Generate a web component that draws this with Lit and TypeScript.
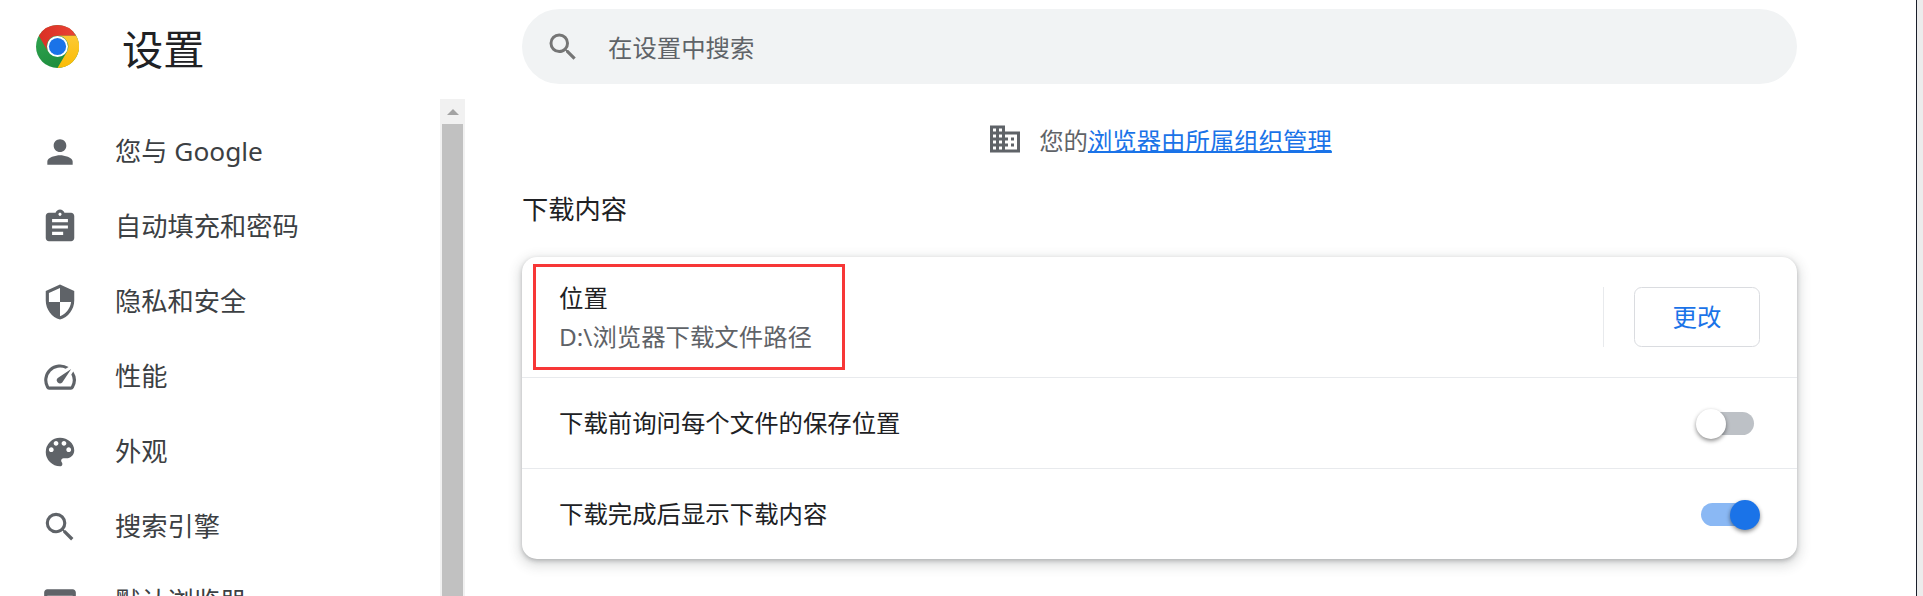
import { LitElement, html, css, svg } from "lit";
import { customElement } from "lit/decorators.js";

const icons: Record<string, any> = {
  person: svg`<path d="M12 12c2.21 0 4-1.79 4-4s-1.79-4-4-4-4 1.79-4 4 1.79 4 4 4zm0 2c-2.67 0-8 1.34-8 4v2h16v-2c0-2.66-5.33-4-8-4z"/>`,
  assignment: svg`<path d="M19 3h-4.18C14.4 1.84 13.3 1 12 1c-1.3 0-2.4.84-2.82 2H5c-1.1 0-2 .9-2 2v14c0 1.1.9 2 2 2h14c1.1 0 2-.9 2-2V5c0-1.1-.9-2-2-2zm-7 0c.55 0 1 .45 1 1s-.45 1-1 1-1-.45-1-1 .45-1 1-1zm2 14H7v-2h7v2zm3-4H7v-2h10v2zm0-4H7V7h10v2z"/>`,
  shield: svg`<path d="M12 1L3 5v6c0 5.55 3.84 10.74 9 12 5.16-1.26 9-6.45 9-12V5l-9-4zm0 10.99h7c-.53 4.12-3.28 7.79-7 8.94V12H5V6.3l7-3.11v8.8z"/>`,
  speed: svg`<path d="M20.38 8.57l-1.23 1.85a8 8 0 0 1-.22 7.58H5.07A8 8 0 0 1 15.58 6.85l1.85-1.23A10 10 0 0 0 3.35 19a2 2 0 0 0 1.72 1h13.85a2 2 0 0 0 1.74-1 10 10 0 0 0-.27-10.44zm-9.79 6.84a2 2 0 0 0 2.83 0l5.66-8.49-8.49 5.66a2 2 0 0 0 0 2.83z"/>`,
  palette: svg`<path d="M12 3a9 9 0 0 0 0 18c.83 0 1.5-.67 1.5-1.5 0-.39-.15-.74-.39-1.01-.23-.26-.38-.61-.38-.99 0-.83.67-1.5 1.5-1.5H16c2.76 0 5-2.24 5-5 0-4.42-4.03-8-9-8zm-5.5 9c-.83 0-1.5-.67-1.5-1.5S5.67 9 6.5 9 8 9.67 8 10.5 7.33 12 6.5 12zm3-4C8.67 8 8 7.33 8 6.5S8.67 5 9.5 5s1.5.67 1.5 1.5S10.33 8 9.5 8zm5 0c-.83 0-1.5-.67-1.5-1.5S13.67 5 14.5 5s1.5.67 1.5 1.5S15.33 8 14.5 8zm3 4c-.83 0-1.5-.67-1.5-1.5S16.67 9 17.5 9s1.5.67 1.5 1.5-.67 1.5-1.5 1.5z"/>`,
  search: svg`<path d="M15.5 14h-.79l-.28-.27A6.471 6.471 0 0 0 16 9.5 6.5 6.5 0 1 0 9.5 16c1.61 0 3.09-.59 4.23-1.57l.27.28v.79l5 4.99L20.49 19l-4.99-5zm-6 0C7.01 14 5 11.99 5 9.5S7.01 5 9.5 5 14 7.01 14 9.5 11.99 14 9.5 14z"/>`,
  browser: svg`<path d="M20 4H4c-1.1 0-2 .9-2 2v12c0 1.1.9 2 2 2h16c1.1 0 2-.9 2-2V6c0-1.1-.9-2-2-2zm0 14H4V8h16v10z"/>`,
  domain: svg`<path d="M12 7V3H2v18h20V7H12zM6 19H4v-2h2v2zm0-4H4v-2h2v2zm0-4H4V9h2v2zm0-4H4V5h2v2zm4 12H8v-2h2v2zm0-4H8v-2h2v2zm0-4H8V9h2v2zm0-4H8V5h2v2zm10 12h-8v-2h2v-2h-2v-2h2v-2h-2V9h8v10zm-2-8h-2v2h2v-2zm0 4h-2v2h2v-2z"/>`,
};

const nav: [string, string][] = [
  ["person", "您与 Google"],
  ["assignment", "自动填充和密码"],
  ["shield", "隐私和安全"],
  ["speed", "性能"],
  ["palette", "外观"],
  ["search", "搜索引擎"],
  ["browser", "默认浏览器"],
];

const icon = (n: string) => html`<svg class="ic" viewBox="0 0 24 24">${icons[n]}</svg>`;

@customElement("app-root")
export class AppRoot extends LitElement {
  static styles = css`
    :host {
      display: block;
      width: 1923px;
      height: 596px;
      overflow: hidden;
      background: #fff;
      font-family: "Noto Sans", "Noto Sans CJK SC", sans-serif;
      color: #202124;
    }
    .page { display: grid; grid-template-columns: 522px 1fr 7px; height: 596px; }
    .side { display: flex; flex-direction: column; min-height: 0; overflow: hidden; }
    .brand { display: flex; align-items: center; height: 99px; flex: none; padding: 0 0 6px 36px; box-sizing: border-box; }
    .logo { width: 43px; height: 43px; flex: none; }
    .brand h1 { margin: 5px 0 0 43px; font-size: 41.25px; font-weight: 400; line-height: 48px; }
    .navwrap { display: flex; flex: 1; min-height: 0; }
    .nav { width: 440px; flex: none; padding-top: 15px; box-sizing: border-box; }
    .item { display: flex; align-items: center; height: 75px; padding-left: 41px; font-size: 26.25px; line-height: 36px; color: #3c4043; }
    .ic { width: 38px; height: 38px; fill: #5f6368; flex: none; }
    .item span { margin: 0 0 1px 36px; white-space: nowrap; }
    .sb { width: 25px; flex: none; background: #f1f1f1; display: flex; flex-direction: column; }
    .up { height: 25px; flex: none; display: flex; align-items: center; justify-content: center; }
    .up i { width: 0; height: 0; border: 6px solid transparent; border-top: 0; border-bottom-color: #a3a3a3; }
    .thumb { flex: 1; margin: 0 2px; background: #c1c1c1; }
    .main { padding-top: 9px; min-width: 0; }
    .search { display: flex; align-items: center; width: 1275px; height: 75px; border-radius: 38px; background: #f1f3f4; box-sizing: border-box; padding-left: 23px; font-size: 24.4px; color: #5f6368; }
    .search svg { width: 36px; height: 36px; fill: #757575; margin-right: 27px; }
    .managed { display: flex; align-items: center; justify-content: center; width: 1275px; height: 40px; margin-top: 35px; font-size: 24.4px; color: #5f6368; }
    .managed svg { width: 36px; height: 36px; fill: #5f6368; margin-right: 16px; }
    .managed a { color: #1a73e8; text-decoration: underline; text-decoration-thickness: 2px; }
    h2 { margin: 32px 0 0; font-size: 26.25px; font-weight: 400; line-height: 36px; color: #202124; }
    .card { width: 1275px; margin-top: 30px; background: #fff; border-radius: 15px; box-shadow: 0 2px 4px rgba(60,64,67,.3), 0 4px 11px 4px rgba(60,64,67,.15); }
    .row { display: flex; align-items: center; height: 91px; box-sizing: border-box; padding: 0 37px; font-size: 24.4px; line-height: 32px; color: #202124; border-top: 1px solid #e8eaed; }
    .row.first { height: 120px; border-top: 0; position: relative; }
    .grow { flex: 1; }
    .sub { color: #5f6368; margin-top: 7px; }
    .vline { width: 1px; height: 60px; background: #e8eaed; margin-right: 30px; }
    .btn { width: 126px; height: 60px; box-sizing: border-box; border: 1px solid #dadce0; border-radius: 7.5px; display: flex; align-items: center; justify-content: center; color: #1a73e8; font-size: 24.4px; }
    .toggle { position: relative; width: 53px; height: 23px; margin-right: 6px; border-radius: 12px; background: #bdc1c6; }
    .toggle b { position: absolute; top: -3px; left: -5px; width: 30px; height: 30px; border-radius: 50%; background: #fff; box-shadow: 0 2px 4px rgba(0,0,0,.45); }
    .toggle.on { background: #8ab8f4; }
    .toggle.on b { left: auto; right: -6px; background: #1a73e8; }
    .mark { position: absolute; left: 11px; top: 7px; width: 312px; height: 106px; box-sizing: border-box; border: 3px solid #f73737; }
    .edge { background: #ececec; border-left: 1px solid #1a1f2b; }
  `;

  render() {
    return html`<div class="page">
      <div class="side">
        <div class="brand">
          <svg class="logo" viewBox="0 0 48 48">
            <defs>
              <linearGradient id="g" x1="0" y1="0" x2="0.4" y2="1"><stop offset="0" stop-color="#34a853"/><stop offset="1" stop-color="#1e8e3e"/></linearGradient>
              <linearGradient id="r" x1="0" y1="0" x2="1" y2="0"><stop offset="0" stop-color="#d93025"/><stop offset="1" stop-color="#ea4335"/></linearGradient>
              <linearGradient id="y" x1="0" y1="0" x2="0" y2="1"><stop offset="0" stop-color="#fcc934"/><stop offset="1" stop-color="#fbbc04"/></linearGradient>
            </defs>
            <circle cx="24" cy="24" r="24" fill="url(#g)"/>
            <path d="M24 0A24 24 0 0 1 44.8 12H24A12 12 0 0 0 13.6 30L3.2 12A24 24 0 0 1 24 0z" fill="url(#r)"/>
            <path d="M44.8 12A24 24 0 0 1 24 48L34.4 30A12 12 0 0 0 24 12H44.8z" fill="url(#y)"/>
            <circle cx="24" cy="24" r="11.7" fill="#fff"/>
            <circle cx="24" cy="24" r="9.6" fill="#1a73e8"/>
          </svg>
          <h1>设置</h1>
        </div>
        <div class="navwrap">
          <div class="nav">
            ${nav.map(([i, t]) => html`<div class="item">${icon(i)}<span>${t}</span></div>`)}
          </div>
          <div class="sb"><div class="up"><i></i></div><div class="thumb"></div></div>
        </div>
      </div>
      <div class="main">
        <div class="search">
          <svg viewBox="0 0 24 24">${icons.search}</svg>
          <span>在设置中搜索</span>
        </div>
        <div class="managed">
          <svg viewBox="0 0 24 24">${icons.domain}</svg>
          <span>您的<a>浏览器由所属组织管理</a></span>
        </div>
        <h2>下载内容</h2>
        <div class="card">
          <div class="row first">
            <div class="grow"><div>位置</div><div class="sub">D:\\浏览器下载文件路径</div></div>
            <div class="vline"></div>
            <div class="btn">更改</div>
            <div class="mark"></div>
          </div>
          <div class="row"><div class="grow">下载前询问每个文件的保存位置</div><div class="toggle"><b></b></div></div>
          <div class="row"><div class="grow">下载完成后显示下载内容</div><div class="toggle on"><b></b></div></div>
        </div>
      </div>
      <div class="edge"></div>
    </div>`;
  }
}
